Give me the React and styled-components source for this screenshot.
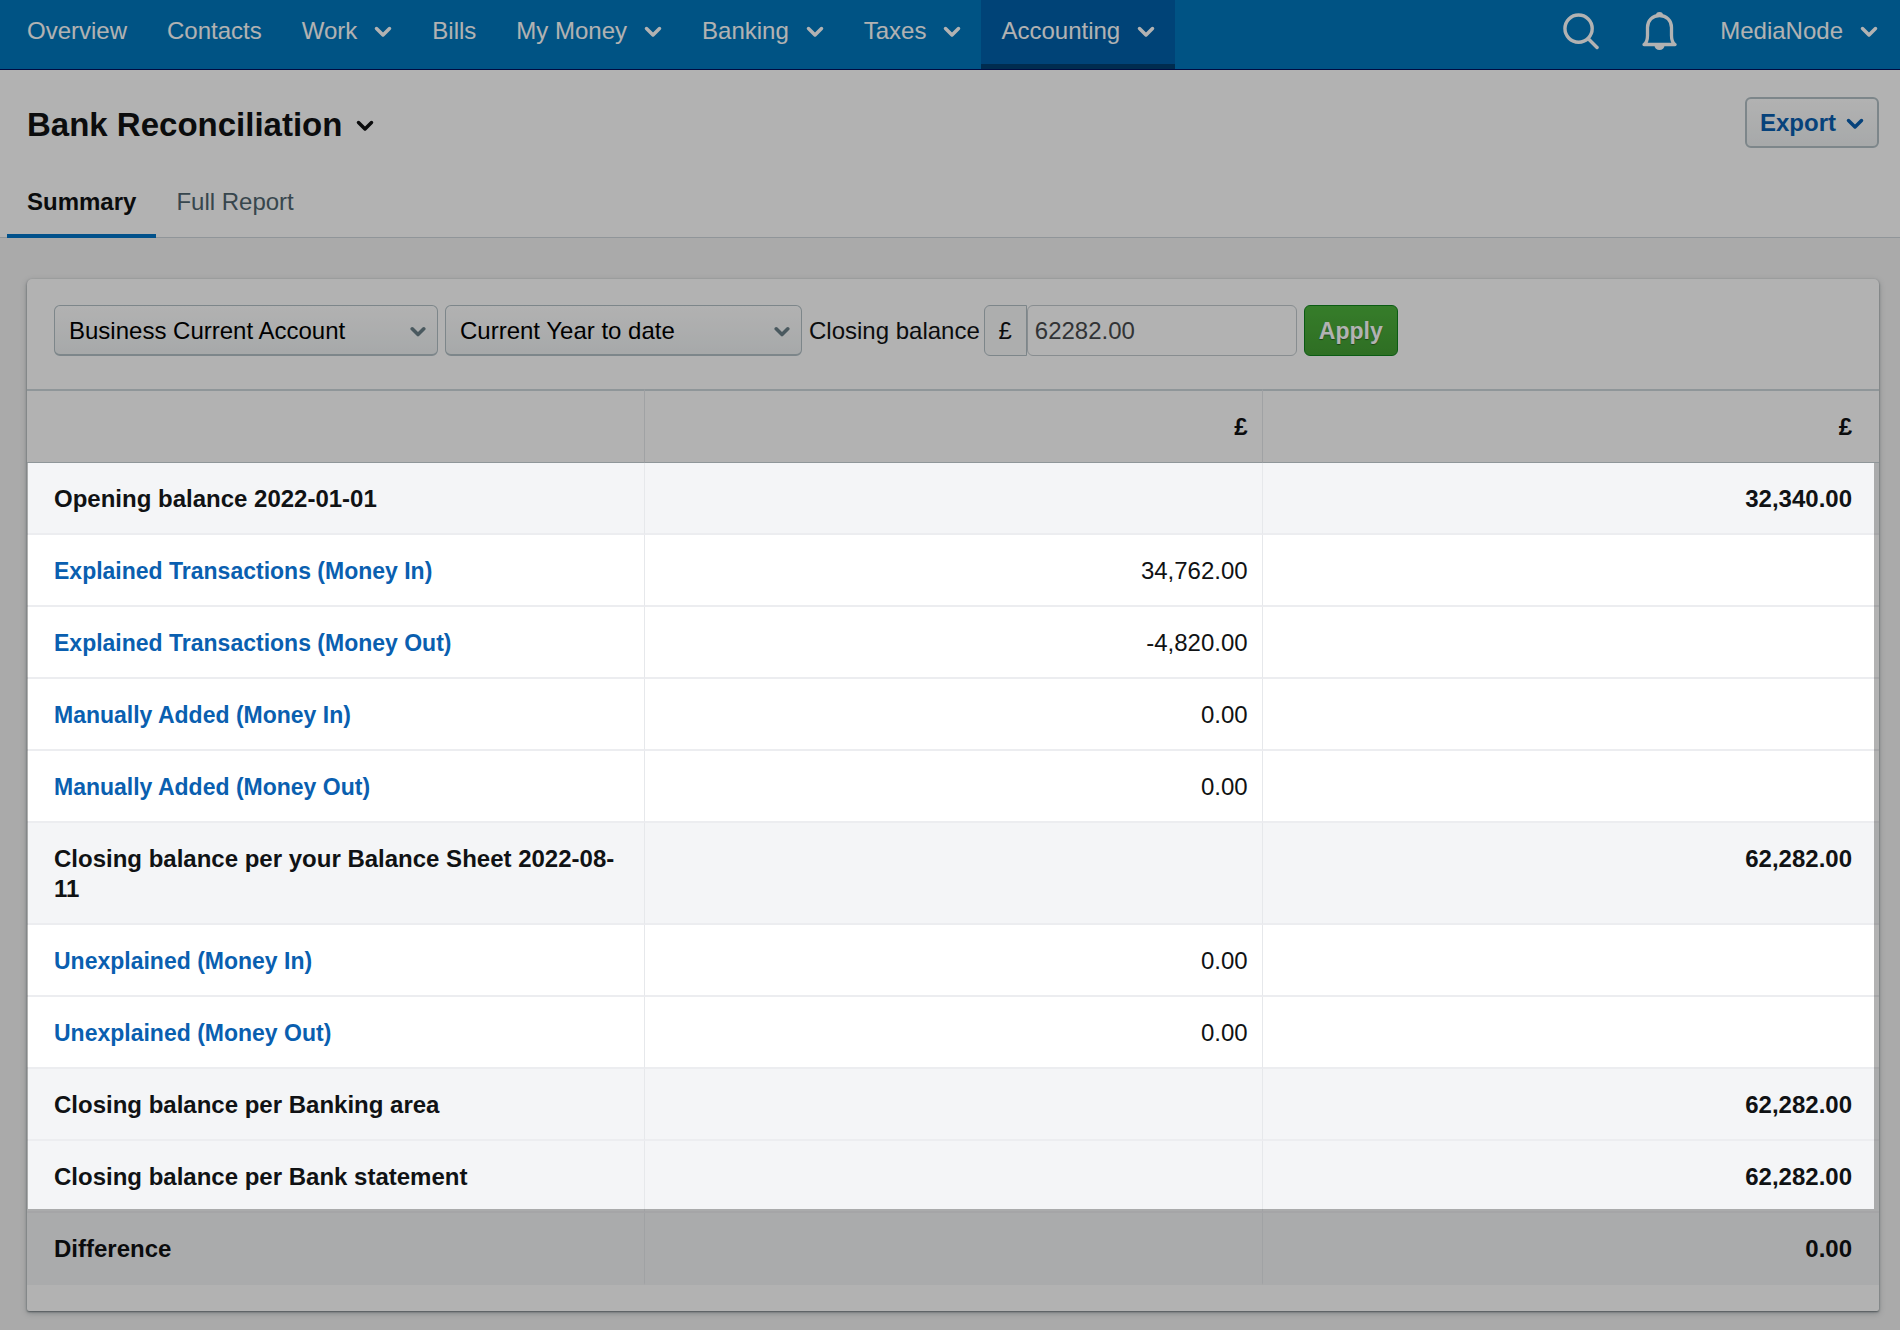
import React from "react";
import styled, { createGlobalStyle, css } from "styled-components";

const GlobalStyle = createGlobalStyle`
  *, *::before, *::after { box-sizing: border-box; }
  body {
    margin: 0;
    background: #f4f4f4;
    color: #101214;
    font-family: "Liberation Sans", Arial, sans-serif;
    font-size: 24px;
    line-height: 30px;
    overflow-x: hidden;
  }
  button, input, select { font: inherit; margin: 0; }
`;

const Page = styled.div`
  position: relative;
  min-height: 100vh;
  overflow: hidden;
`;

const TopBar = styled.header`
  display: flex;
  justify-content: space-between;
  height: 70px;
  padding: 0 22px 0 7px;
  background: #0078be;
  border-bottom: 1px solid #00125e;
`;

const MainNav = styled.nav`
  display: flex;
`;

const navItem = css`
  display: flex;
  align-items: center;
  gap: 17px;
  padding: 0 20px 2px;
  border: 0;
  border-bottom: 5px solid ${(p) => (p.$active ? "#003f72" : "transparent")};
  background: ${(p) => (p.$active ? "#0061ab" : "transparent")};
  color: #fff;
  text-decoration: none;
  white-space: nowrap;
`;

const NavLink = styled.a`
  ${navItem}
`;

const NavMenu = styled.button`
  ${navItem}
`;

const Tools = styled.div`
  display: flex;
  align-items: center;
  gap: 43px;
  padding-bottom: 7px;
`;

const IconButton = styled.button`
  display: flex;
  padding: 0;
  border: 0;
  background: none;
  color: #fff;
`;

const AccountMenu = styled(IconButton)`
  align-items: center;
  gap: 17px;
`;

const PageHeader = styled.section`
  background: #fff;
  border-bottom: 1px solid #cfd6db;
  padding: 27px 21px 0 7px;
`;

const TitleRow = styled.div`
  display: flex;
  align-items: flex-end;
  justify-content: space-between;
  padding-left: 20px;
`;

const Title = styled.h1`
  display: flex;
  align-items: center;
  gap: 14px;
  margin: 0;
  font-size: 33px;
  line-height: 46px;
`;

const buttonBox = css`
  height: 51px;
  border-radius: 6px;
  border: 1px solid #b3c0c6;
`;

const ExportButton = styled.button`
  ${buttonBox}
  display: flex;
  align-items: center;
  gap: 10px;
  padding: 0 13px;
  background: linear-gradient(#fff, #eff2f3);
  border-width: 2px;
  color: #0a5fb0;
  font-weight: bold;
`;

const Tabs = styled.nav`
  display: flex;
  margin: 21px 0 -1px;
`;

const Tab = styled.a`
  padding: 18px 20px 17px;
  border-bottom: 4px solid ${(p) => (p.$active ? "#0275c8" : "transparent")};
  color: ${(p) => (p.$active ? "#101214" : "#50656f")};
  font-weight: ${(p) => (p.$active ? "bold" : "normal")};
  text-decoration: none;
`;

const Card = styled.main`
  margin: 41px 21px 18px 27px;
  padding-bottom: 26px;
  background: #fff;
  border-radius: 5px 5px 2px 2px;
  box-shadow: 0 1px 2px rgba(50, 65, 72, 0.6), 0 2px 6px rgba(50, 65, 72, 0.3);
`;

const Filters = styled.form`
  display: flex;
  align-items: center;
  gap: 7px;
  padding: 26px 27px 33px;
`;

const SelectBox = styled.div`
  position: relative;
  width: ${(p) => p.$width}px;
`;

const Select = styled.select`
  ${buttonBox}
  display: block;
  width: 100%;
  padding: 2px 48px 0 14px;
  appearance: none;
  background: linear-gradient(#fff, #eff2f3);
  border-bottom-width: 2px;
  color: #000;
`;

const SelectArrow = styled.span`
  position: absolute;
  right: 12px;
  top: 0;
  bottom: 0;
  display: flex;
  align-items: center;
  color: #6b8089;
  pointer-events: none;
`;

const MoneyField = styled.div`
  display: flex;
  align-items: center;
  gap: 4px;
`;

const MoneyControl = styled.div`
  display: flex;
`;

const Currency = styled.span`
  ${buttonBox}
  display: flex;
  align-items: center;
  justify-content: center;
  width: 43px;
  background: #f8f9fa;
  border-radius: 6px 0 0 6px;
`;

const MoneyInput = styled.input`
  ${buttonBox}
  width: 270px;
  padding: 0 7px;
  background: #fff;
  border-color: #c3cbcf;
  color: #484b4e;
`;

const ApplyButton = styled.button`
  ${buttonBox}
  padding: 0 14px;
  border-color: #0f831c;
  background: linear-gradient(#4eb33d, #439f33);
  color: #fff;
  font-size: 23px;
  font-weight: bold;
  text-shadow: 0 1px 1px rgba(0, 0, 0, 0.4);
`;

const Report = styled.div`
  position: relative;
`;

const Table = styled.table`
  width: 100%;
  table-layout: fixed;
  border-collapse: separate;
  border-spacing: 0;
`;

const Cell = styled.td`
  height: 72px;
  padding: 21px 14px 19px;
  border-bottom: 2px solid #ecedf0;
  border-left: 1px solid #e6e8eb;
  font-weight: ${(p) => (p.$strong ? "bold" : "normal")};
  text-align: right;
  vertical-align: top;
  &:first-child {
    padding-left: 27px;
    border-left: 0;
    font-weight: bold;
    text-align: left;
  }
  &:last-child {
    padding-right: 27px;
  }
`;

const HeadCell = styled(Cell)`
  height: 74px;
  border-top: 2px solid #cdd7dc;
  border-bottom: 1px solid #cdd7dc;
  font-weight: bold;
`;

const Row = styled.tr`
  background: ${(p) => (p.$total ? "#f4f5f7" : "#fff")};
  &:last-child td, &:last-child th {
    border-bottom-color: #f4f5f7;
  }
`;

const RowLink = styled.a`
  color: #0a5fb0;
  font-size: 23px;
  text-decoration: none;
`;

/* Guided-tour spotlight: dims the page around the balance rows. */
const Spotlight = styled.div`
  position: absolute;
  z-index: 2;
  top: 74px;
  right: 5px;
  bottom: 76px;
  left: 1px;
  box-shadow: 0 0 0 4000px rgba(0, 0, 0, 0.3);
  pointer-events: none;
`;

function Chevron({ size = 18, weight = 3.5 }) {
  return (
    <svg width={size} height={size} viewBox="0 0 18 18" fill="none" aria-hidden="true">
      <path d="M2.500 6.500L9 13l6.500-6.500" stroke="currentColor" strokeWidth={weight} strokeLinecap="round" strokeLinejoin="round" />
    </svg>
  );
}

function SearchIcon() {
  return (
    <svg width="36" height="37" viewBox="0 0 37 38" fill="none" stroke="currentColor" strokeWidth="3.500" strokeLinecap="round" aria-hidden="true">
      <circle cx="16" cy="16" r="14" />
      <path d="M26 26.500l9 9" />
    </svg>
  );
}

function BellIcon() {
  return (
    <svg width="35" height="38" viewBox="0 0 35 38" fill="none" aria-hidden="true">
      <path d="M2 32.500c3-2 3.500-5 3.500-9v-8C5.500 8.500 10.500 3.500 17.500 3.500S29.500 8.500 29.500 15.500v8c0 4 .5 7 3.500 9z" stroke="currentColor" strokeWidth="3.300" strokeLinejoin="round" />
      <path d="M14 3a3.500 3 0 0 1 7 0zM12.500 33.500h10a5 4.500 0 0 1-10 0z" fill="currentColor" />
    </svg>
  );
}

const navigation = [
  { label: "Overview" },
  { label: "Contacts" },
  { label: "Work", menu: true },
  { label: "Bills" },
  { label: "My Money", menu: true },
  { label: "Banking", menu: true },
  { label: "Taxes", menu: true },
  { label: "Accounting", menu: true, active: true },
];

const rows = [
  { label: "Opening balance 2022-01-01", total: "32,340.00" },
  { label: "Explained Transactions (Money In)", amount: "34,762.00" },
  { label: "Explained Transactions (Money Out)", amount: "-4,820.00" },
  { label: "Manually Added (Money In)", amount: "0.00" },
  { label: "Manually Added (Money Out)", amount: "0.00" },
  { label: "Closing balance per your Balance Sheet 2022-08-11", total: "62,282.00" },
  { label: "Unexplained (Money In)", amount: "0.00" },
  { label: "Unexplained (Money Out)", amount: "0.00" },
  { label: "Closing balance per Banking area", total: "62,282.00" },
  { label: "Closing balance per Bank statement", total: "62,282.00" },
  { label: "Difference", total: "0.00" },
];

function FilterSelect({ label, width, value }) {
  return (
    <SelectBox $width={width}>
      <Select aria-label={label} defaultValue={value}>
        <option>{value}</option>
      </Select>
      <SelectArrow>
        <Chevron size={16} weight={4} />
      </SelectArrow>
    </SelectBox>
  );
}

export default function App() {
  return (
    <Page>
      <GlobalStyle />
      <TopBar>
        <MainNav aria-label="Main">
          {navigation.map(({ label, menu, active }) =>
            menu ? (
              <NavMenu key={label} type="button" $active={active}>
                {label}
                <Chevron />
              </NavMenu>
            ) : (
              <NavLink key={label} href="#">
                {label}
              </NavLink>
            )
          )}
        </MainNav>
        <Tools>
          <IconButton type="button" aria-label="Search">
            <SearchIcon />
          </IconButton>
          <IconButton type="button" aria-label="Notifications">
            <BellIcon />
          </IconButton>
          <AccountMenu type="button">
            MediaNode
            <Chevron />
          </AccountMenu>
        </Tools>
      </TopBar>

      <PageHeader>
        <TitleRow>
          <Title>
            Bank Reconciliation
            <Chevron />
          </Title>
          <ExportButton type="button">
            Export
            <Chevron />
          </ExportButton>
        </TitleRow>
        <Tabs aria-label="Report views">
          <Tab href="#" $active aria-current="page">
            Summary
          </Tab>
          <Tab href="#">Full Report</Tab>
        </Tabs>
      </PageHeader>

      <Card>
        <Filters onSubmit={(event) => event.preventDefault()}>
          <FilterSelect label="Account" width={384} value="Business Current Account" />
          <FilterSelect label="Period" width={357} value="Current Year to date" />
          <MoneyField>
            <label htmlFor="closing-balance">Closing balance</label>
            <MoneyControl>
              <Currency>£</Currency>
              <MoneyInput id="closing-balance" type="text" defaultValue="62282.00" />
            </MoneyControl>
          </MoneyField>
          <ApplyButton type="submit">Apply</ApplyButton>
        </Filters>

        <Report>
          <Table>
            <thead>
              <tr>
                <HeadCell />
                <HeadCell as="th" scope="col">£</HeadCell>
                <HeadCell as="th" scope="col">£</HeadCell>
              </tr>
            </thead>
            <tbody>
              {rows.map(({ label, amount, total }) => (
                <Row key={label} $total={Boolean(total)}>
                  <Cell as="th" scope="row">
                    {total ? label : <RowLink href="#">{label}</RowLink>}
                  </Cell>
                  <Cell>{amount}</Cell>
                  <Cell $strong>{total}</Cell>
                </Row>
              ))}
            </tbody>
          </Table>
          <Spotlight />
        </Report>
      </Card>
    </Page>
  );
}
